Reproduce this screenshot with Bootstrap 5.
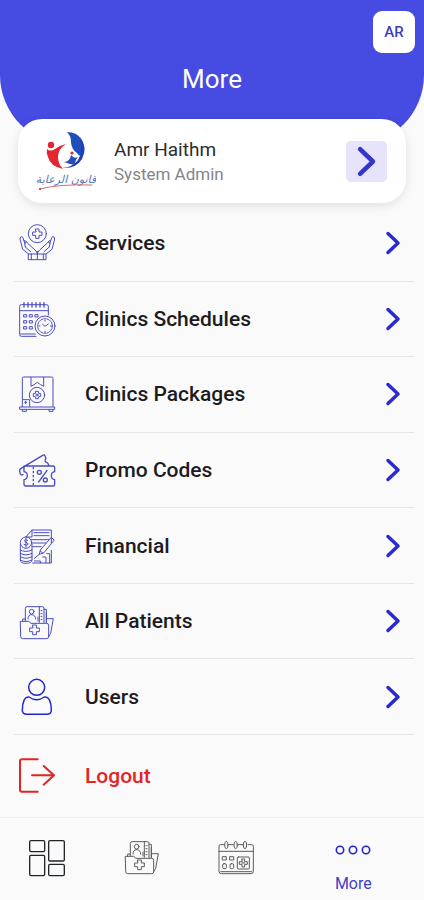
<!DOCTYPE html>
<html lang="en">
<head>
<meta charset="utf-8">
<meta name="viewport" content="width=device-width, initial-scale=1">
<title>More</title>
<link href="https://cdn.jsdelivr.net/npm/bootstrap@5.3.0/dist/css/bootstrap.min.css" rel="stylesheet">
<style>
  body { font-family: Roboto, "Noto Sans", sans-serif; background: #fafafa; color: #1c1c1e; }
  svg { display: block; fill: none; stroke: currentColor; stroke-linecap: round; stroke-linejoin: round; }
  a { color: inherit; text-decoration: none; }
  .top-panel { background: #464be2; border-radius: 0 0 70px 70px; padding: 11px 9px 51px; }
  .lang-btn { width: 42px; height: 42px; border-radius: 9px; font-size: 15px; font-weight: 500; color: #3a3dc0; }
  .page-title { font-size: 26px; line-height: 30px; font-weight: 400; margin-top: 11px; }
  .profile { margin: -26px 18px 0; height: 84px; border-radius: 24px; padding: 0 19px 0 18px; box-shadow: 0 3px 10px rgba(0,0,0,.1); }
  .profile-text { margin-left: 18px; padding-top: 2px; }
  .profile-name { font-size: 19px; line-height: 24px; color: #2c2c2e; }
  .profile-role { font-size: 17px; line-height: 24px; color: #858588; }
  .profile-go { width: 41px; height: 41px; border-radius: 5px; background: #e6e3fb; color: #3335cc; }
  .menu-list { margin: 2px 10px 0 14px; display: grid; grid-template-rows: repeat(7, minmax(64px, 1fr)) 83px; }
  .menu-row { font-size: 21px; line-height: 24px; font-weight: 500; padding: 0 13px 0 4px; gap: 27px; }
  .menu-row + .menu-row { border-top: 1px solid #e6e6e8; }
  .menu-icon { width: 40px; height: 40px; color: #4a4cc0; stroke-width: 3; flex: none; }
  .blue { color: #2424cc; }
  .menu-row .chevron { color: #2a2ad0; }
  .logout { color: #e5231f; }
  .tab-bar { display: grid; grid-template-columns: 2fr 2fr 2fr 3fr; height: 83px; border-top: 1px solid #efeff0; }
  .tab-icon { width: 40px; height: 40px; color: #5c5c5c; stroke-width: 3; }
  .tab-label { font-size: 16px; line-height: 20px; margin-top: 4px; }
  .tab-more { color: #4142c4; }
</style>
<script src="https://cdn.jsdelivr.net/npm/bootstrap@5.3.0/dist/js/bootstrap.bundle.min.js"></script>
</head>
<body>
<svg width="0" height="0" class="position-absolute" aria-hidden="true">
  <symbol id="chevron" viewBox="0 0 16 24"><path d="M3 2.500L13 12 3 21.500" stroke-width="3.500"/></symbol>
  <symbol id="folder" viewBox="24 27 120 120">
    <path d="M32 88h24l7 6h47q6 0 6 6v34q0 6-6 6H38q-6 0-6-6zM38 88v-7h8M46 86V49q0-5 5-5h46q5 0 5 5v43M88 44v47M102 52h7v40M112 80h18l-8 44-6 10"/>
    <circle cx="65" cy="59" r="7"/><path d="M54 81q0-13 11-13t12 13M93 56h3M93 65h3M93 74h3M93 83h3M84 75v12M109 62v28"/>
    <path d="M68 99h11v9h9v11h-9v9H68v-9h-9v-11h9z"/>
  </symbol>
  <symbol id="folder-tab" viewBox="18 33 120 120"><use href="#folder" x="24" y="27" width="120" height="120"/></symbol>
</svg>
<div class="d-flex flex-column min-vh-100">
  <header class="top-panel text-white">
    <div class="d-flex justify-content-end">
      <button type="button" class="lang-btn btn btn-light bg-white border-0 p-0">AR</button>
    </div>
    <h1 class="page-title text-center mb-0">More</h1>
  </header>

  <a href="#profile" class="profile bg-white d-flex align-items-center">
    <svg width="60" height="64" viewBox="0 0 60 64" role="img" aria-label="Clinic logo">
      <g stroke="none">
        <circle cx="15" cy="16" r="3.200" fill="#e32630"/>
        <path d="M11 20q3 3 8 0 5-4 11-5-8 5-8 13 0 7 5 12-13-3-15-12-2-4-1-8z" fill="#e32630"/>
        <path d="M31 3q10 0 14 7 4 7 0 15-2 3-3 0-7-5-7-12 0-6-4-10z" fill="#1f4fba"/>
        <path d="M44 8q8 10 2 22-6 10-20 9 11-1 16-8 5-8 2-23z" fill="#1f3fb4"/>
        <path d="M28 33q6 0 7-7 3 4 7 2-3 3-3 8-6-1-11-3z" fill="#274db8"/><circle cx="36" cy="24" r="1.600" fill="#e32630"/>
      </g>
      <text x="30" y="54" text-anchor="middle" direction="rtl" font-family="DejaVu Sans, sans-serif" font-size="11" font-style="italic" fill="#5576b5" stroke="none">قانون الرعاية</text>
      <path d="M4 60q18-5 52-4" stroke="#d96a78" stroke-width="1"/><circle cx="4" cy="60" r="1" fill="#df2837" stroke="none"/>
    </svg>
    <div class="profile-text flex-grow-1">
      <div class="profile-name">Amr Haithm</div>
      <div class="profile-role">System Admin</div>
    </div>
    <span class="profile-go d-flex align-items-center justify-content-center"><svg width="21" height="31"><use href="#chevron"/></svg></span>
  </a>

  <nav class="menu-list flex-grow-1" aria-label="More">
    <a href="#services" class="menu-row d-flex align-items-center">
      <svg class="menu-icon" viewBox="24 27 120 120"><circle cx="82" cy="59" r="27"/><path d="M77 45h10v9h9v10h-9v9H77v-9h-9V54h9z"/><path d="M56 120h52v17H56zM64 120v17M82 112v25M100 120v17M56 120L38 106 30 75q0-8 6-7 3 1 4 7l5 14M108 120l18-14 8-31q0-8-6-7-3 1-4 7l-5 14M45 98l17 15M119 98l-17 15M46 98q-4-10 0-14 4-2 7 4l22 20q7 6 7 13 0-7 7-13l22-20q3-6 7-4 4 4 0 14M42 80q4-3 7 3M122 80q-4-3-7 3"/></svg>
      <span class="flex-grow-1">Services</span><svg class="chevron" width="16" height="24"><use href="#chevron"/></svg></a>
    <a href="#schedules" class="menu-row d-flex align-items-center">
      <svg class="menu-icon" viewBox="24 27 120 120"><path d="M78 139H34q-5 0-5-5V49q0-5 5-5h76q5 0 5 5v26M29 62h86M32 132h44"/><path d="M42 38v13M54 38v13M66 38v13M78 38v13M90 38v13M102 38v13" stroke-width="4"/><path d="M42 74h8v7h-8zM59 74h8v7h-8zM76 74h8v7h-8zM42 92h8v7h-8zM59 92h8v7h-8zM42 110h8v7h-8zM59 110h8v7h-8z"/><circle cx="105" cy="108" r="30"/><circle cx="105" cy="108" r="22" stroke-dasharray="7 3"/><path d="M98 103l7 6 10-7M105 90v3M105 124v3M87 108h3M121 108h3"/></svg>
      <span class="flex-grow-1">Clinics Schedules</span><svg class="chevron" width="16" height="24"><use href="#chevron"/></svg></a>
    <a href="#packages" class="menu-row d-flex align-items-center">
      <svg class="menu-icon" viewBox="24 27 120 120"><path d="M37 125V40q0-4 4-4h84q4 0 4 4v85M30 126h104v7H30zM37 134v5h12v-5M117 134v5h12v-5M63 37v27l9-5 10-7 10 7 9 5V37M38 104h21v20M44 112h6M47 109v7"/><circle cx="81" cy="90" r="23"/><path d="M77 79h8l1 6 6 1v8l-6 1-1 6h-8l-1-6-6-1v-8l6-1z"/><circle cx="81" cy="90" r="3"/></svg>
      <span class="flex-grow-1">Clinics Packages</span><svg class="chevron" width="16" height="24"><use href="#chevron"/></svg></a>
    <a href="#promo" class="menu-row d-flex align-items-center">
      <svg class="menu-icon" viewBox="24 27 120 120"><g stroke-width="4"><path d="M42 75h88q4 0 4 5v12q-10 2-10 12t10 12v14q0 5-4 5H46q-4 0-4-5v-14q10-2 10-12T42 92zM39 101q-8 2-9-5l-1-8q0-3 3-5L98 43q5-3 7 2l3 7q-4 4-2 10l7 4 4 8"/><path d="M70 79v4M70 91v4M70 103v4M70 115v4M70 127v4M111 88l-25 35"/><circle cx="88" cy="94" r="6"/><circle cx="106" cy="117" r="6"/></g></svg>
      <span class="flex-grow-1">Promo Codes</span><svg class="chevron" width="16" height="24"><use href="#chevron"/></svg></a>
    <a href="#financial" class="menu-row d-flex align-items-center">
      <svg class="menu-icon" viewBox="24 27 120 120"><path d="M48 59l18-20h58v38M124 100v38H68M66 39v21H48M72 47h45M72 56h45M62 68h54M66 78h42M68 89h25M132 70l-30 37-14 5 3-13 32-37zM91 102l8 7M88 112l-15 12M110 110h9v28M98 120h10v18M73 132h18v6"/><circle cx="48" cy="77" r="17"/><path d="M53 70q-9-5-9 1t7 6q8 5-1 8l-8-3M48 64v26M31 82v47q0 10 17 10t18-10V82M31 99q15 9 35 0M31 109q16 10 35 0M31 119q16 10 35 0M31 129q16 10 35 0"/></svg>
      <span class="flex-grow-1">Financial</span><svg class="chevron" width="16" height="24"><use href="#chevron"/></svg></a>
    <a href="#patients" class="menu-row d-flex align-items-center">
      <svg class="menu-icon"><use href="#folder"/></svg>
      <span class="flex-grow-1">All Patients</span><svg class="chevron" width="16" height="24"><use href="#chevron"/></svg></a>
    <a href="#users" class="menu-row d-flex align-items-center">
      <svg class="menu-icon blue" viewBox="24 34 120 120"><g stroke-width="4.500"><circle cx="80" cy="65" r="24"/><path d="M57 94q23 16 46 0 9-2 15 8 6 12 6 32 0 12-14 12H51q-14 0-14-12 0-20 6-32 6-10 14-8z"/></g></svg>
      <span class="flex-grow-1">Users</span><svg class="chevron" width="16" height="24"><use href="#chevron"/></svg></a>
    <a href="#logout" class="menu-row logout d-flex align-items-center">
      <svg class="menu-icon logout" viewBox="24 276 120 120"><path d="M83 286H36q-6 0-6 6v85q0 6 6 6h47M66 334h66M101 306l31 28-31 28" stroke-width="6"/></svg>
      <span>Logout</span></a>
  </nav>

  <footer class="tab-bar">
    <a href="#dashboard" aria-label="Dashboard" class="d-flex justify-content-center pt-3 mt-1">
      <svg class="tab-icon text-dark" viewBox="84 84 120 120"><g stroke-width="4"><rect x="92" y="92" width="45" height="33" rx="4"/><rect x="149" y="92" width="47" height="61" rx="4"/><rect x="92" y="136" width="45" height="61" rx="4"/><rect x="149" y="163" width="47" height="34" rx="4"/></g></svg></a>
    <a href="#files" aria-label="Patients" class="d-flex justify-content-center pt-3 mt-1"><svg class="tab-icon"><use href="#folder-tab"/></svg></a>
    <a href="#calendar" aria-label="Calendar" class="d-flex justify-content-center pt-3 mt-1">
      <svg class="tab-icon" viewBox="12 86 120 120"><path d="M37 106H26q-5 0-5 5v75q0 7 7 7h89q7 0 7-7v-75q0-5-5-5h-10M50 106h14M78 106h14M21 126h103M26 187h93"/><ellipse cx="43" cy="107" rx="5" ry="11"/><ellipse cx="71" cy="107" rx="5" ry="11"/><ellipse cx="99" cy="107" rx="5" ry="11"/><path d="M32 142h11v10H32zM54 142h11v10H54z"/><rect x="32" y="163" width="11" height="15" rx="4"/><rect x="54" y="163" width="11" height="15" rx="4"/><rect x="76" y="143" width="36" height="36" rx="3"/><path d="M90 149h8v8h8v8h-8v8h-8v-8h-8v-8h8zM90 161h8"/></svg></a>
    <a href="#more" aria-current="page" class="tab-more d-flex flex-column align-items-center pt-3 mt-1">
      <svg class="blue" width="40" height="32" viewBox="0 0 40 32"><g stroke-width="1.600"><circle cx="7" cy="12" r="3.700"/><circle cx="20" cy="12" r="3.700"/><circle cx="33" cy="12" r="3.700"/></g></svg>
      <span class="tab-label">More</span></a>
  </footer>
</div>
</body>
</html>
